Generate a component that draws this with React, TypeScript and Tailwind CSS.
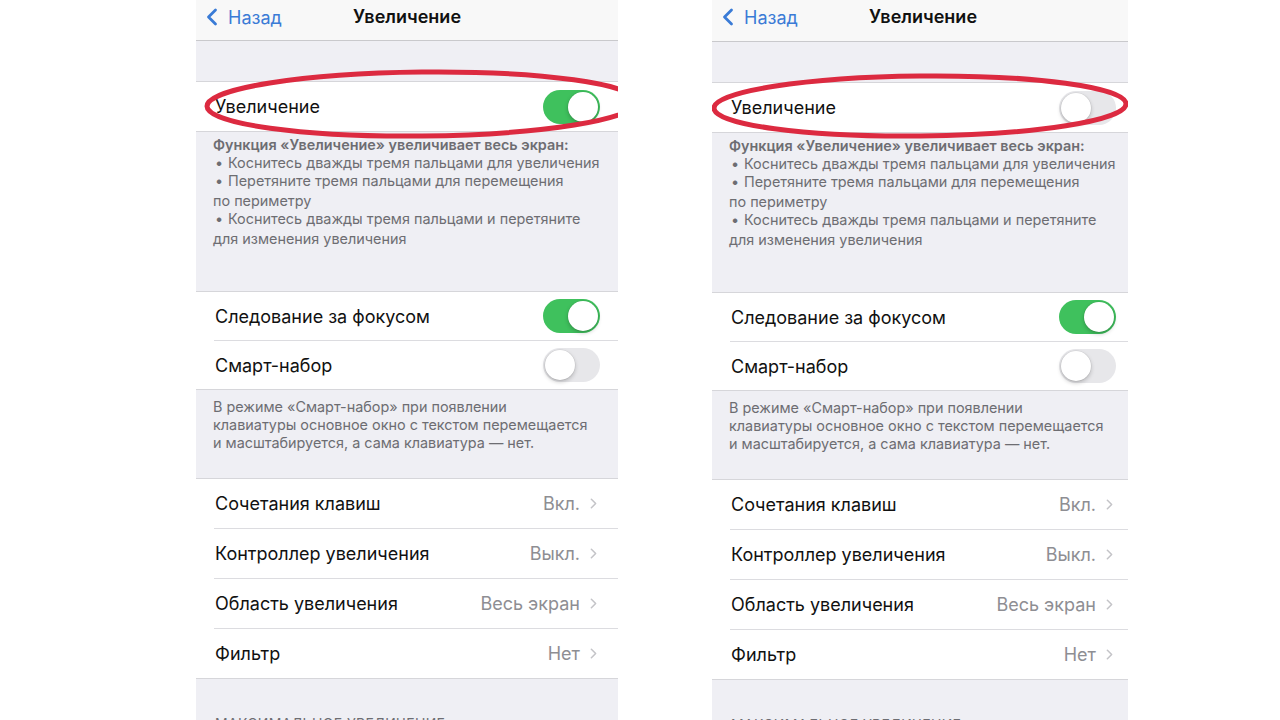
import { ChevronLeft, ChevronRight } from "lucide-react";

type Oval = { cx: number; cy: number; rx: number; ry: number };

const Toggle = ({ on }: { on: boolean }) => (
  <div
    className={`flex h-[34px] w-[57px] items-center rounded-full p-[2px] ${
      on ? "justify-end bg-[#3fc15d]" : "justify-start bg-[#e7e7ea]"
    }`}
  >
    <div className="h-[30px] w-[30px] rounded-full bg-white shadow-[0_2px_4px_rgba(0,0,0,0.22),0_0_0_0.5px_rgba(0,0,0,0.08)]" />
  </div>
);

const Sep = () => <div className="ml-[18px] h-px bg-[#dcdce0]" />;

const SwitchRow = ({ label, on, h }: { label: string; on: boolean; h: string }) => (
  <div className={`flex ${h} items-center justify-between pl-[19px] pr-[18px]`}>
    <span className="text-[18px] text-[#111]">{label}</span>
    <Toggle on={on} />
  </div>
);

const LinkRow = ({ label, value }: { label: string; value: string }) => (
  <div className="flex h-[49px] items-center justify-between pl-[19px] pr-[16px]">
    <span className="text-[18px] text-[#111]">{label}</span>
    <div className="flex items-center gap-[5px]">
      <span className="text-[18px] text-[#8e8e93]">{value}</span>
      <ChevronRight className="h-[17px] w-[17px] text-[#c4c4c8]" strokeWidth={2.2} />
    </div>
  </div>
);

const Bullet = ({ children }: { children: string }) => (
  <div>
    <span className="inline-block w-[15px] pl-[2px]">•</span>
    {children}
  </div>
);

const Panel = ({
  width,
  zoomOn,
  oval,
  navH,
}: {
  width: number;
  zoomOn: boolean;
  oval: Oval;
  navH: string;
}) => (
  <div className="h-[720px] shrink-0 overflow-hidden" style={{ width }}>
    <div className="relative h-[720px] w-[422px] bg-[#efeff4]">
      {/* nav bar */}
      <div
        className={`relative flex ${navH} items-start border-b border-[#c9c9cc] bg-[#f8f8f8] pt-[3px]`}
      >
        <div className="flex items-center pl-[2px] text-[#3a7bd6]">
          <ChevronLeft className="h-[28px] w-[28px]" strokeWidth={2.4} />
          <span className="ml-[2px] text-[18px]">Назад</span>
        </div>
        <div className="absolute inset-x-0 top-[3px] text-center text-[18px] leading-[28px] font-semibold text-[#111]">
          Увеличение
        </div>
      </div>

      <div className="h-[40px]" />

      <div className="border-y border-[#d6d6da] bg-white">
        <div className="flex h-[49px] items-center justify-between pl-[19px] pr-[18px]">
          <span className="text-[18px] text-[#111]">Увеличение</span>
          <Toggle on={zoomOn} />
        </div>
      </div>

      <div className="h-[159px] whitespace-nowrap pl-[17px] pt-[4px] text-[14.4px] leading-[18px] text-[#6d6d72]">
        <div className="font-semibold">Функция «Увеличение» увеличивает весь экран:</div>
        <Bullet>Коснитесь дважды тремя пальцами для увеличения</Bullet>
        <Bullet>Перетяните тремя пальцами для перемещения</Bullet>
        <div className="mt-[2px]">по периметру</div>
        <Bullet>Коснитесь дважды тремя пальцами и перетяните</Bullet>
        <div className="mt-[2px]">для изменения увеличения</div>
      </div>

      <div className="border-y border-[#d6d6da] bg-white">
        <SwitchRow label="Следование за фокусом" on={true} h="h-[48px]" />
        <Sep />
        <SwitchRow label="Смарт-набор" on={false} h="h-[48px]" />
      </div>

      <div className="h-[88px] whitespace-nowrap pl-[17px] pt-[8px] text-[14.4px] leading-[18px] text-[#6d6d72]">
        <div>В режиме «Смарт-набор» при появлении</div>
        <div>клавиатуры основное окно с текстом перемещается</div>
        <div>и масштабируется, а сама клавиатура — нет.</div>
      </div>

      <div className="border-y border-[#d6d6da] bg-white">
        <LinkRow label="Сочетания клавиш" value="Вкл." />
        <Sep />
        <LinkRow label="Контроллер увеличения" value="Выкл." />
        <Sep />
        <LinkRow label="Область увеличения" value="Весь экран" />
        <Sep />
        <LinkRow label="Фильтр" value="Нет" />
      </div>

      <div className="pl-[19px] pt-[34px] text-[14px] uppercase tracking-wide text-[#6d6d72]">
        Максимальное увеличение
      </div>

      {/* red marker oval */}
      <svg
        className="pointer-events-none absolute left-0 top-0"
        width={422}
        height={720}
        viewBox="0 0 422 720"
      >
        <ellipse
          cx={oval.cx}
          cy={oval.cy}
          rx={oval.rx}
          ry={oval.ry}
          fill="none"
          stroke="#dc2a40"
          strokeWidth={5}
          transform={`rotate(-0.6 ${oval.cx} ${oval.cy})`}
        />
      </svg>
    </div>
  </div>
);

const App = () => {
  return (
    <div className="flex h-[720px] w-[1280px] gap-[94px] overflow-hidden bg-white pl-[196px] font-['Inter','Noto_Sans',sans-serif]">
      <Panel
        width={422}
        zoomOn={true}
        navH="h-[41px]"
        oval={{ cx: 226, cy: 104, rx: 215, ry: 32 }}
      />
      <Panel
        width={416}
        zoomOn={false}
        navH="h-[42px]"
        oval={{ cx: 208, cy: 106, rx: 206, ry: 30 }}
      />
    </div>
  );
};

export default App;
